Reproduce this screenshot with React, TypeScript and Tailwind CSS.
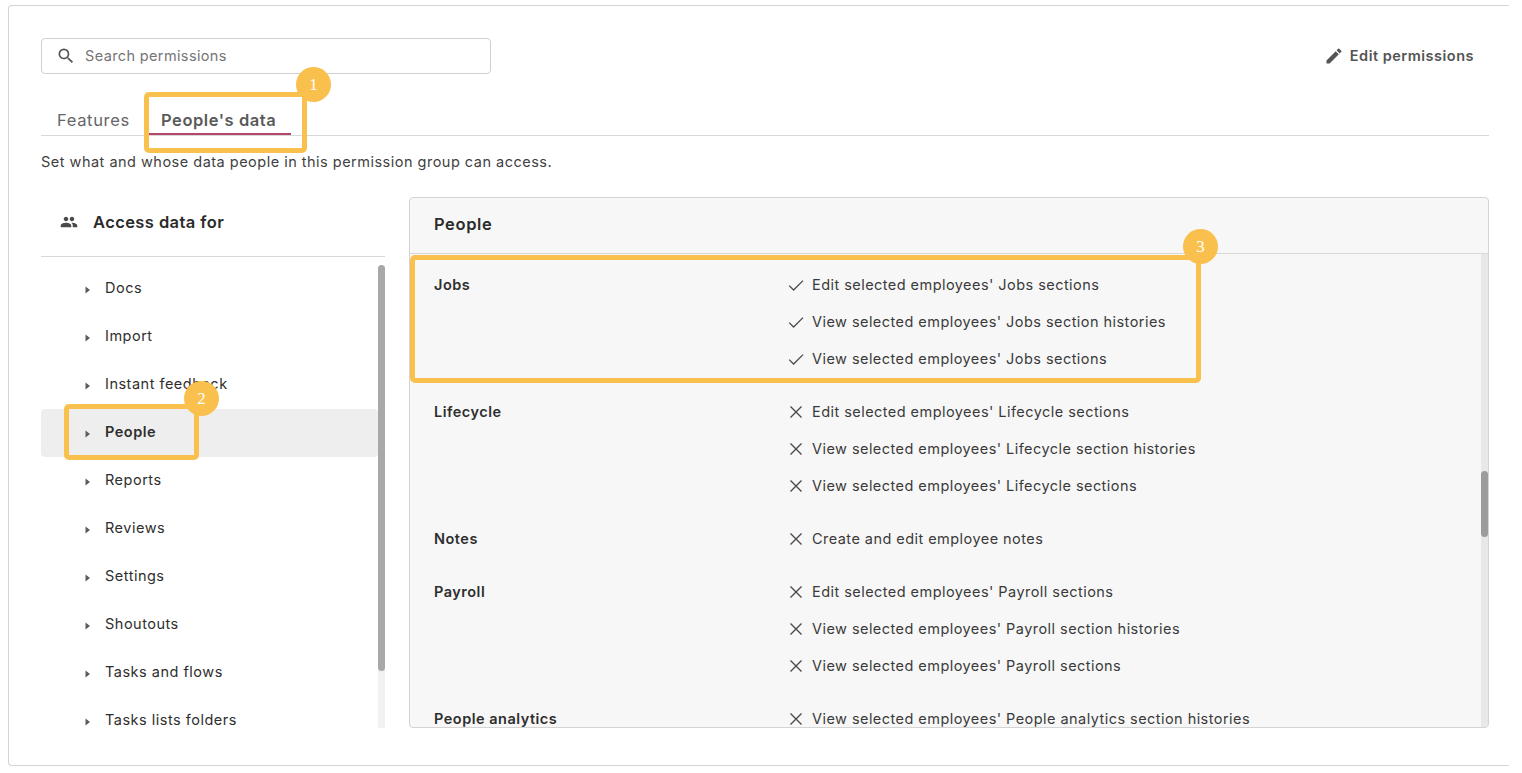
import React from "react";

const font = { fontFamily: '"Inter", "Liberation Sans", sans-serif' };

function Caret() {
  return (
    <svg width="8" height="10" viewBox="0 0 8 10" className="shrink-0 mr-3 mt-[1px]">
      <path d="M0.5 1.5 L5 5 L0.5 8.5 Z" fill="#5c5c5c" />
    </svg>
  );
}

function Check() {
  return (
    <svg width="16" height="16" viewBox="0 0 16 16" className="shrink-0 mr-2" fill="none">
      <path d="M1.2 8.6 L5.6 13 L15 3.6" stroke="#4a4a4a" strokeWidth="1.3" />
    </svg>
  );
}

function Cross() {
  return (
    <svg width="16" height="16" viewBox="0 0 16 16" className="shrink-0 mr-2" fill="none">
      <path d="M2.5 2.5 L13.5 13.5 M13.5 2.5 L2.5 13.5" stroke="#4a4a4a" strokeWidth="1.4" />
    </svg>
  );
}

function Badge({ n, className }: { n: number; className: string }) {
  return (
    <div
      className={`absolute w-[35px] h-[35px] rounded-full bg-[#f9c04d] text-white flex items-center justify-center text-[17px] ${className}`}
      style={{ fontFamily: '"Liberation Serif", serif' }}
    >
      {n}
    </div>
  );
}

const listItems = [
  "Docs",
  "Import",
  "Instant feedback",
  "People",
  "Reports",
  "Reviews",
  "Settings",
  "Shoutouts",
  "Tasks and flows",
  "Tasks lists folders",
];

const groups: { name: string; mt: string; ok?: boolean; items: string[] }[] = [
  {
    name: "Jobs",
    mt: "mt-0",
    ok: true,
    items: [
      "Edit selected employees' Jobs sections",
      "View selected employees' Jobs section histories",
      "View selected employees' Jobs sections",
    ],
  },
  {
    name: "Lifecycle",
    mt: "mt-8",
    items: [
      "Edit selected employees' Lifecycle sections",
      "View selected employees' Lifecycle section histories",
      "View selected employees' Lifecycle sections",
    ],
  },
  { name: "Notes", mt: "mt-8", items: ["Create and edit employee notes"] },
  {
    name: "Payroll",
    mt: "mt-8",
    items: [
      "Edit selected employees' Payroll sections",
      "View selected employees' Payroll section histories",
      "View selected employees' Payroll sections",
    ],
  },
  {
    name: "People analytics",
    mt: "mt-8",
    items: ["View selected employees' People analytics section histories"],
  },
];

export default function App() {
  return (
    <div className="relative w-[1522px] h-[773px] bg-white overflow-hidden pt-[5px] pl-2 text-[#2e2e2e]" style={font}>
      <div className="w-[1501px] h-[761px] border-t border-l border-b border-[#d4d4d4] rounded-l-[4px] pl-8 pt-8 pr-5">
        {/* top bar */}
        <div className="flex items-center justify-between h-9">
          <div className="w-[450px] h-9 border border-[#d0d0d0] rounded-[4px] flex items-center pl-[14px]">
            <svg width="20" height="20" viewBox="0 0 24 24" className="mr-[9px] shrink-0" fill="#555">
              <path d="M15.5 14h-.79l-.28-.27A6.47 6.47 0 0 0 16 9.5 6.5 6.5 0 1 0 9.5 16c1.61 0 3.09-.59 4.23-1.57l.27.28v.79l5 4.99L20.49 19l-4.99-5zm-6 0C7.01 14 5 11.99 5 9.5S7.01 5 9.5 5 14 7.01 14 9.5 11.99 14 9.5 14z" />
            </svg>
            <span className="text-[14.5px] tracking-[0.37px] text-[#757575]">Search permissions</span>
          </div>
          <div className="flex items-center mr-[15px] text-[#545454]">
            <svg width="20" height="20" viewBox="0 0 24 24" className="mr-[6px]" fill="#545454">
              <path d="M3 17.25V21h3.75L17.81 9.94l-3.75-3.75L3 17.25zM20.71 7.04a1 1 0 0 0 0-1.41l-2.34-2.34a1 1 0 0 0-1.41 0l-1.83 1.83 3.75 3.75 1.83-1.83z" />
            </svg>
            <span className="text-[14.5px] font-semibold tracking-[0.5px]">Edit permissions</span>
          </div>
        </div>

        {/* tabs */}
        <div className="flex items-end h-[62px] border-b border-[#d8d8d8]">
          <div className="ml-4 w-[91px] h-[30px] pt-[3px] text-[16.5px] tracking-[0.65px] text-[#666]">Features</div>
          <div className="w-[143px] h-[30px] pt-[3px] pl-[13px] text-[16.5px] font-semibold tracking-[0.56px] text-[#5a5a5a] border-b-2 border-[#b5476c]">
            People's data
          </div>
        </div>

        <p className="mt-4 text-[14.5px] leading-5 tracking-[0.49px] text-[#3f3f3f]">
          Set what and whose data people in this permission group can access.
        </p>

        {/* main */}
        <div className="mt-[25px] flex gap-6">
          {/* left */}
          <div className="w-[344px] shrink-0">
            <div className="h-[60px] border-b border-[#d8d8d8] flex items-center pl-[19px] pb-[9px]">
              <svg width="18" height="18" viewBox="0 0 24 24" fill="#4a4a4a" className="mr-[15px]">
                <path d="M16 11c1.66 0 2.99-1.34 2.99-3S17.66 5 16 5s-3 1.34-3 3 1.34 3 3 3zm-8 0c1.66 0 2.99-1.34 2.99-3S9.66 5 8 5 5 6.34 5 8s1.34 3 3 3zm0 2c-2.33 0-7 1.17-7 3.5V19h14v-2.5C15 14.17 10.33 13 8 13zm8 0c-.29 0-.62.02-.97.05 1.16.84 1.97 1.97 1.97 3.45V19h6v-2.5c0-2.33-4.67-3.5-7-3.5z" />
              </svg>
              <span className="text-[16.5px] font-semibold tracking-[0.41px] text-[#2b2b2b]">Access data for</span>
            </div>
            <div className="h-[471px] flex overflow-hidden">
              <div className="w-[337px] pt-2">
                {listItems.map((t) => (
                  <div
                    key={t}
                    className={`h-12 flex items-center pl-[44px] rounded-[4px] text-[14.5px] tracking-[0.5px] ${
                      t === "People" ? "bg-[#eeeeee] font-semibold" : ""
                    }`}
                  >
                    <Caret />
                    <span className="mb-[2px]">{t}</span>
                  </div>
                ))}
              </div>
              <div className="w-[7px] h-full bg-[#f1f1f1] rounded-[4px] mt-2">
                <div className="h-[406px] bg-[#a8a8a8] rounded-[4px]" />
              </div>
            </div>
          </div>

          {/* right */}
          <div className="w-[1080px] h-[531px] border border-[#d4d4d4] rounded-[4px] bg-[#f7f7f7] flex flex-col overflow-hidden">
            <div className="h-[56px] shrink-0 border-b border-[#d8d8d8] flex items-center pl-6 pb-[2px] text-[16.5px] font-semibold tracking-[0.6px] text-[#2b2b2b]">
              People
            </div>
            <div className="flex flex-1 min-h-0">
              <div className="flex-1 pl-6 pt-5 overflow-hidden">
                {groups.map((g) => (
                  <div key={g.name} className={`flex ${g.mt}`}>
                    <div className="w-[354px] text-[14.5px] leading-[21px] font-semibold tracking-[0.5px]">{g.name}</div>
                    <div className="flex flex-col gap-4">
                      {g.items.map((it) => (
                        <div key={it} className="flex items-center h-[21px] text-[14.5px] tracking-[0.45px] text-[#3a3a3a]">
                          {g.ok ? <Check /> : <Cross />}
                          {it}
                        </div>
                      ))}
                    </div>
                  </div>
                ))}
              </div>
              <div className="w-[7px] bg-[#e8e8e8] pt-[217px]">
                <div className="h-[66px] bg-[#9c9c9c] rounded-[4px]" />
              </div>
            </div>
          </div>
        </div>
      </div>

      {/* annotations */}
      <div className="absolute left-[144px] top-[92px] w-[163px] h-[61px] border-[5px] border-[#f9c04d] rounded-[5px]" />
      <Badge n={1} className="left-[296px] top-[67px]" />
      <div className="absolute left-[64px] top-[404px] w-[135px] h-[56px] border-[5px] border-[#f9c04d] rounded-[5px]" />
      <Badge n={2} className="left-[184px] top-[381px]" />
      <div className="absolute left-[410px] top-[255px] w-[791px] h-[128px] border-[5px] border-[#f9c04d] rounded-[5px]" />
      <Badge n={3} className="left-[1183px] top-[229px]" />
    </div>
  );
}
